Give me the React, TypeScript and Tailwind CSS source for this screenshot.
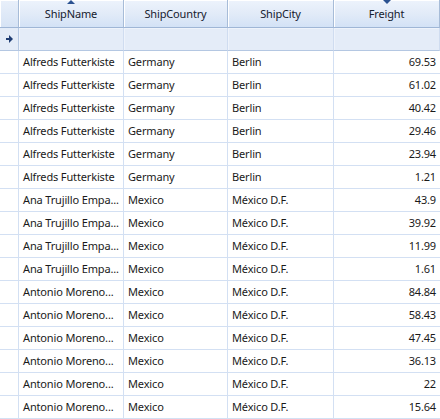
import React from "react";

const rows: [string, string, string, string][] = [
  ["Alfreds Futterkiste", "Germany", "Berlin", "69.53"],
  ["Alfreds Futterkiste", "Germany", "Berlin", "61.02"],
  ["Alfreds Futterkiste", "Germany", "Berlin", "40.42"],
  ["Alfreds Futterkiste", "Germany", "Berlin", "29.46"],
  ["Alfreds Futterkiste", "Germany", "Berlin", "23.94"],
  ["Alfreds Futterkiste", "Germany", "Berlin", "1.21"],
  ["Ana Trujillo Empa...", "Mexico", "México D.F.", "43.9"],
  ["Ana Trujillo Empa...", "Mexico", "México D.F.", "39.92"],
  ["Ana Trujillo Empa...", "Mexico", "México D.F.", "11.99"],
  ["Ana Trujillo Empa...", "Mexico", "México D.F.", "1.61"],
  ["Antonio Moreno...", "Mexico", "México D.F.", "84.84"],
  ["Antonio Moreno...", "Mexico", "México D.F.", "58.43"],
  ["Antonio Moreno...", "Mexico", "México D.F.", "47.45"],
  ["Antonio Moreno...", "Mexico", "México D.F.", "36.13"],
  ["Antonio Moreno...", "Mexico", "México D.F.", "22"],
  ["Antonio Moreno...", "Mexico", "México D.F.", "15.64"],
];

const cols = "grid grid-cols-[19px_105px_104px_106px_106px]";

const HeaderCell = ({ label, sort }: { label: string; sort?: "up" | "down" }) => (
  <div className="relative h-[28px] flex items-center justify-center pt-[1px] border-r border-r-[#a7bcd8] border-b border-b-[#9fb6d6] bg-gradient-to-b from-[#edf3fc] via-[#e2ebf8] to-[#d3e2f6] shadow-[inset_1px_1px_0_#ffffff] text-[#15202e]">
    {sort === "up" && (
      <svg className="absolute top-0 left-1/2 -translate-x-1/2" width="8" height="4" viewBox="0 0 8 4">
        <path d="M4 0 L8 4 L0 4 Z" fill="#2b5291" />
      </svg>
    )}
    {sort === "down" && (
      <svg className="absolute top-0 left-1/2 -translate-x-1/2" width="8" height="4" viewBox="0 0 8 4">
        <path d="M0 0 L8 0 L4 4 Z" fill="#2b5291" />
      </svg>
    )}
    {label}
  </div>
);

const App = () => {
  return (
    <div
      className="w-[440px] h-[419px] overflow-hidden bg-white text-[11px] tracking-[-0.15px] text-[#1a1a1a]"
      style={{ fontFamily: '"Noto Sans", "Open Sans", sans-serif' }}
    >
      {/* header */}
      <div className={cols}>
        <div className="h-[28px] border-r border-r-[#a7bcd8] border-b border-b-[#9fb6d6] bg-gradient-to-b from-[#e9f0fa] to-[#d6e3f5] shadow-[inset_1px_1px_0_#ffffff]" />
        <HeaderCell label="ShipName" sort="up" />
        <HeaderCell label="ShipCountry" />
        <HeaderCell label="ShipCity" />
        <HeaderCell label="Freight" sort="down" />
      </div>

      {/* filter row */}
      <div className={cols}>
        <div className="h-[23px] flex items-center justify-center bg-[#e4ecf8] border-r border-r-[#b4c7e2] border-b border-b-[#b4c7e2]">
          <svg width="7" height="8" viewBox="0 0 7 8">
            <path d="M3 0 L7 4 L3 8 Z M0 3 H4 V5 H0 Z" fill="#1f3d73" />
          </svg>
        </div>
        {[0, 1, 2, 3].map((i) => (
          <div
            key={i}
            className="h-[23px] bg-[#e4ecf8] border-r border-r-[#cfdcf0] border-b border-b-[#b4c7e2] shadow-[inset_1px_1px_0_#eef3fb]"
          />
        ))}
      </div>

      {/* data rows */}
      {rows.map(([name, country, city, freight], i) => (
        <div key={i} className={cols}>
          <div className="h-[23px] border-r border-r-[#d3e0f3] border-b border-b-[#d3e0f3]" />
          <div className="h-[23px] flex items-center pl-[4px] pt-[1px] border-r border-r-[#d3e0f3] border-b border-b-[#d3e0f3] whitespace-nowrap">
            {name}
          </div>
          <div className="h-[23px] flex items-center pl-[4px] pt-[1px] border-r border-r-[#d3e0f3] border-b border-b-[#d3e0f3]">
            {country}
          </div>
          <div className="h-[23px] flex items-center pl-[4px] pt-[1px] border-r border-r-[#d3e0f3] border-b border-b-[#d3e0f3]">
            {city}
          </div>
          <div className="h-[23px] flex items-center justify-end pr-[4px] pt-[1px] border-b border-b-[#d3e0f3]">
            {freight}
          </div>
        </div>
      ))}
    </div>
  );
};

export default App;
